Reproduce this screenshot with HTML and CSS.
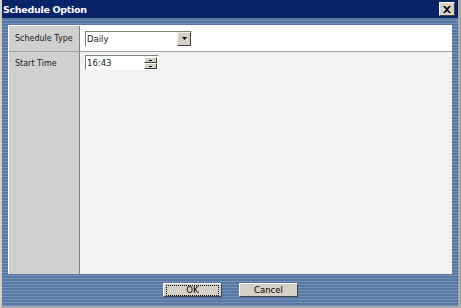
FILE: index.html
```html
<!DOCTYPE html>
<html lang="en">
<head>
  <meta charset="UTF-8">
  <title>Schedule Option</title>
  <link rel="stylesheet" href="styles.css">
</head>
<body>
  <div class="dialog">
    <div class="titlebar">
      <span class="title">Schedule Option</span>
      <button class="close" aria-label="Close">
        <svg width="8" height="7" viewBox="0 0 8 7"><path d="M0 0h2l2 2 2-2h2L5 3.5 8 7H6L4 5 2 7H0l3-3.5z" fill="#000"/></svg>
      </button>
    </div>

    <div class="body">
      <div class="panel">
        <div class="row first">
          <div class="label">Schedule Type</div>
          <div class="field">
            <div class="select">
              <span class="value">Daily</span>
              <span class="arrow"><svg width="5" height="3" viewBox="0 0 5 3"><path d="M0 0h5L2.5 3z" fill="#000"/></svg></span>
            </div>
          </div>
        </div>
        <div class="row second">
          <div class="label">Start Time</div>
          <div class="field">
            <div class="spinner">
              <span class="value">16:43</span>
              <span class="spin">
                <span class="up"></span>
                <span class="down"></span>
              </span>
            </div>
          </div>
        </div>
        <div class="row filler">
          <div class="label"></div>
          <div class="field"></div>
        </div>
      </div>

      <div class="buttons">
        <button class="btn ok"><span>OK</span></button>
        <button class="btn">Cancel</button>
      </div>
    </div>
  </div>
</body>
</html>
```

FILE: styles.css
```css
body {
  margin: 0;
  padding: 0;
  background: #d4d0c8;
  font-family: 'DejaVu Sans', 'Liberation Sans', sans-serif;
}

.dialog {
  width: 461px;
  height: 308px;
  display: flex;
  flex-direction: column;
  box-sizing: border-box;
  border-left: 2px solid #d4d0c8;
  border-right: 3px solid #a8a8a8;
  border-bottom: 2px solid #a8a8a8;
}

.titlebar {
  height: 18px;
  background: #0a246a;
  display: flex;
  align-items: center;
  justify-content: space-between;
  padding: 0 3px 0 1px;
}

.title {
  color: #fff;
  font-weight: bold;
  font-size: 9.5px;
  letter-spacing: -0.3px;
}

.close {
  width: 16px;
  height: 14px;
  padding: 0;
  background: #d4d0c8;
  border: 1px solid;
  border-color: #fff #404040 #404040 #fff;
  display: flex;
  align-items: center;
  justify-content: center;
}

.body {
  flex: 1;
  display: flex;
  flex-direction: column;
  background: repeating-linear-gradient(to bottom, #5878a2 0, #5878a2 2px, #7592ba 2px, #7592ba 3px);
  padding: 7px 6px 0 6px;
}

.panel {
  flex: 1;
  display: flex;
  flex-direction: column;
  background: #f2f2f2;
  border-top: 1px solid #fff;
  border-left: 1px solid #fff;
}

.row {
  display: flex;
}

.row .label {
  width: 64px;
  padding-left: 6px;
  background: #d0d0d0;
  border-right: 1px solid #808080;
  font-size: 8px;
  color: #1a1a1a;
  white-space: nowrap;
  display: flex;
  align-items: center;
}

.row .field {
  flex: 1;
  padding: 4px 5px;
  display: flex;
  align-items: center;
}

.row.first {
  height: 25px;
  border-bottom: 1px solid #a0a0a0;
}

.row.first .field {
  background: #fff;
}

.row.second .label {
  align-items: flex-start;
  padding-top: 7px;
}

.row.second .field {
  padding-top: 3px;
}

.filler {
  flex: 1;
}

.select {
  width: 107px;
  height: 16px;
  border: 1px solid;
  border-color: #808080 #fff #fff #808080;
  background: #fff;
  display: flex;
  align-items: center;
  justify-content: space-between;
  box-sizing: border-box;
}

.value {
  font-size: 8.5px;
  padding-left: 1px;
  color: #1a1a1a;
}

.arrow {
  width: 14px;
  height: 14px;
  background: #d4d0c8;
  border: 1px solid;
  border-color: #f0f0f0 #404040 #404040 #f0f0f0;
  box-sizing: border-box;
  display: flex;
  align-items: center;
  justify-content: center;
}

.spinner {
  width: 74px;
  height: 15px;
  border: 1px solid;
  border-color: #808080 #fff #fff #808080;
  background: #fff;
  display: flex;
  align-items: center;
  justify-content: space-between;
  box-sizing: border-box;
}

.spin {
  display: flex;
  flex-direction: column;
  width: 13px;
  margin-right: 1px;
}

.spin span {
  height: 6px;
  background: #d4d0c8;
  border: 1px solid;
  border-color: #fff #404040 #404040 #fff;
  box-sizing: border-box;
  position: relative;
}

.spin span::after {
  content: '';
  position: absolute;
  left: 4px;
  top: 2px;
  width: 3px;
  height: 1px;
  background: #000;
}

.buttons {
  height: 32px;
  display: flex;
  justify-content: center;
  align-items: center;
  gap: 17px;
  padding-left: 1px;
}

.btn {
  width: 59px;
  height: 14px;
  padding: 0;
  background: #d4d0c8;
  border: 1px solid;
  border-color: #fff #404040 #404040 #fff;
  font-family: 'DejaVu Sans', 'Liberation Sans', sans-serif;
  font-size: 8.5px;
  color: #000;
}

.btn.ok span {
  display: block;
  margin: 1px 2px;
  border: 1px dotted #000;
  line-height: 9px;
}
```
